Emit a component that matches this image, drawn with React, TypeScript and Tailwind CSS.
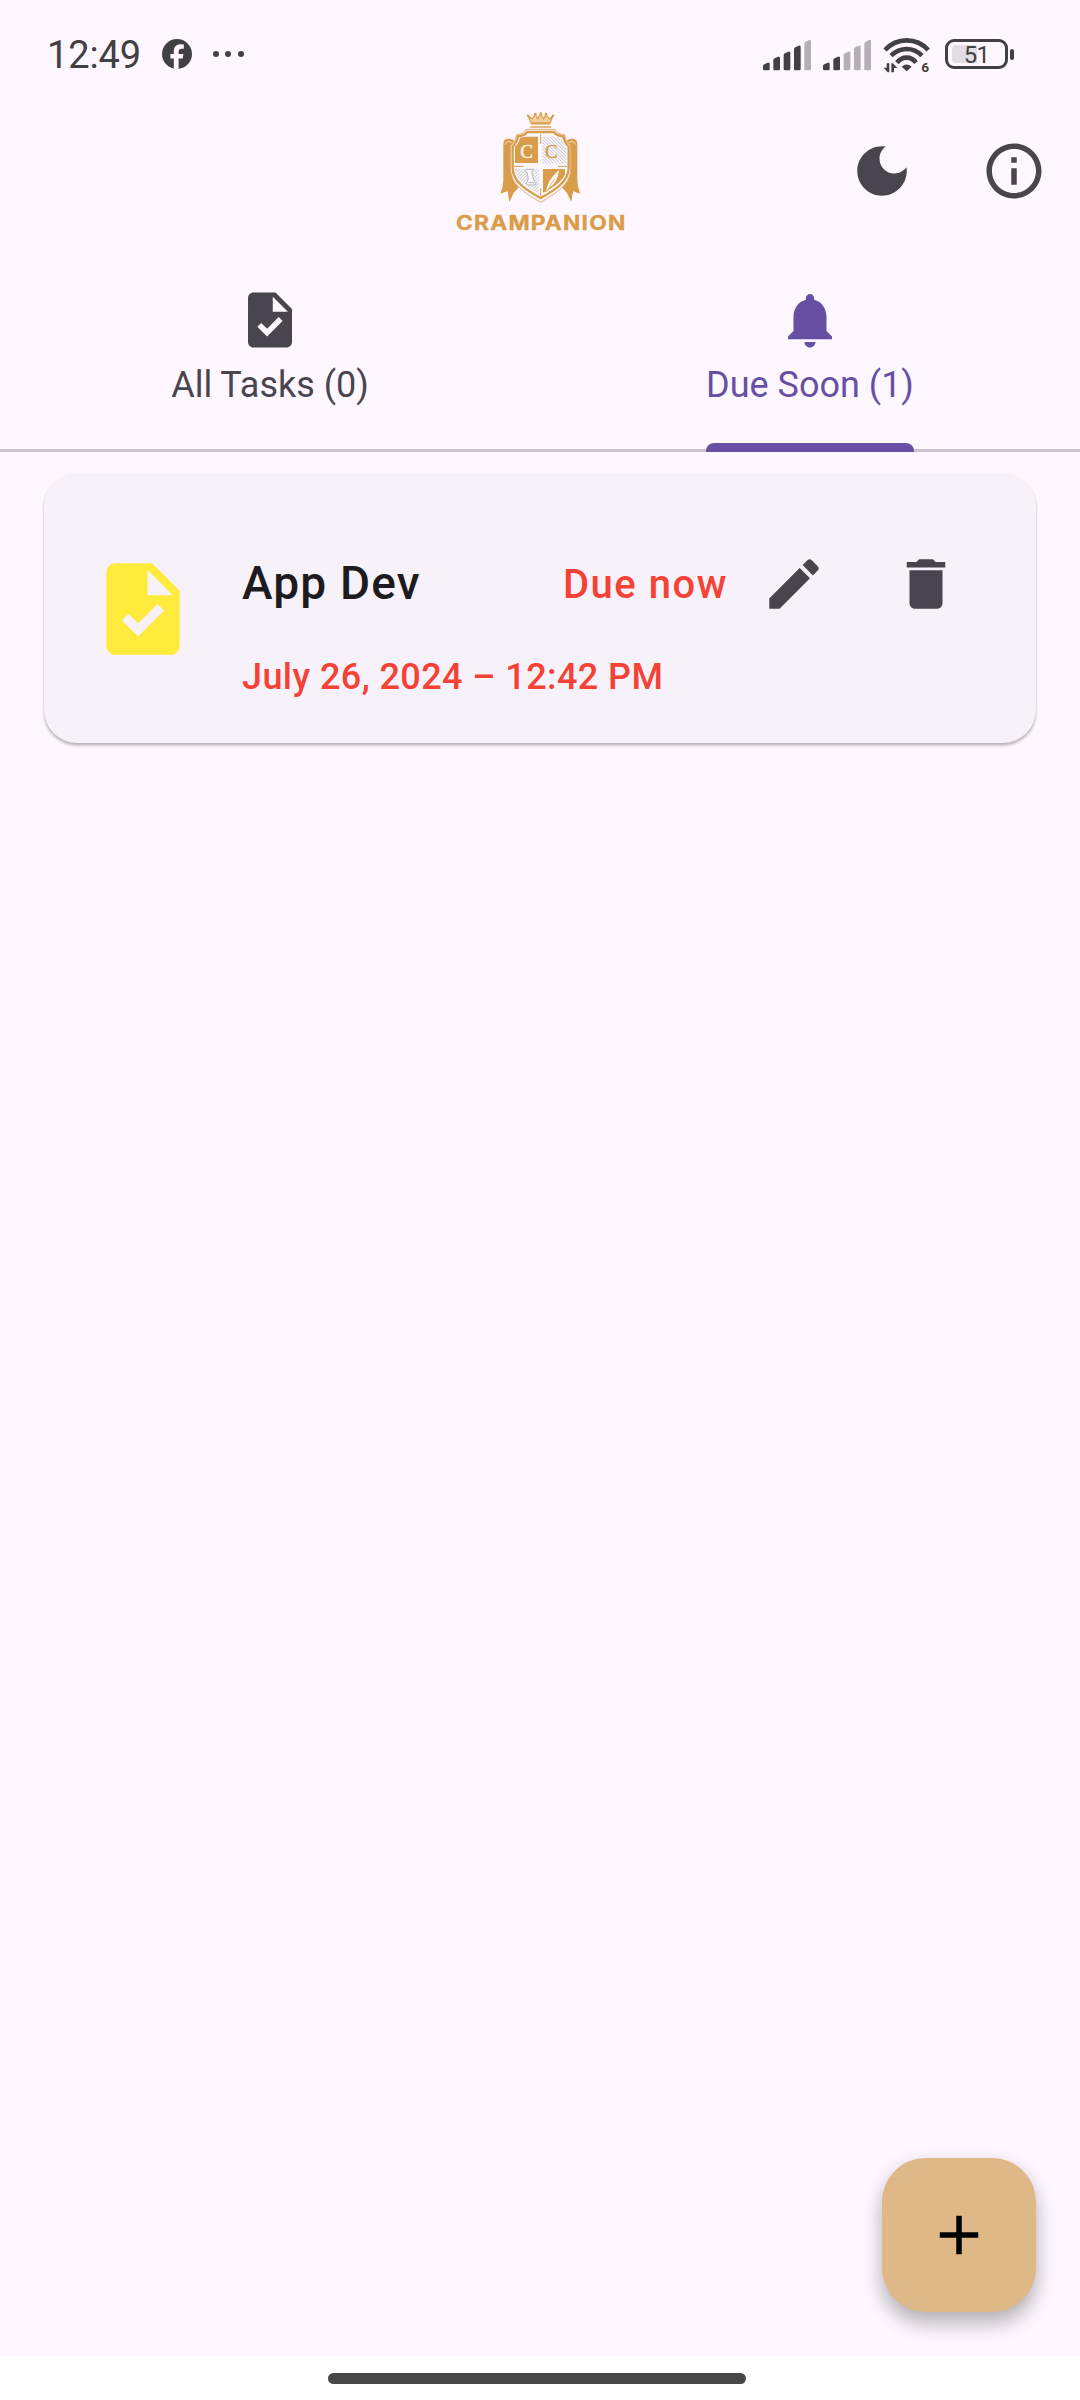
import React from "react";

type IconProps = { d: string; className?: string };

function Icon({ d, className = "size-[66px]" }: IconProps) {
  return (
    <svg viewBox="0 0 24 24" fill="currentColor" className={`block shrink-0 ${className}`}>
      <path d={d} />
    </svg>
  );
}

const ICONS = {
  moon: "M12 3c-4.97 0-9 4.03-9 9s4.03 9 9 9 9-4.03 9-9c0-.46-.04-.92-.1-1.36-.98 1.37-2.58 2.26-4.4 2.26-2.98 0-5.4-2.42-5.4-5.4 0-1.81.89-3.42 2.26-4.4C12.92 3.04 12.46 3 12 3z",
  info: "M11 7h2v2h-2zm0 4h2v6h-2zm1-9C6.48 2 2 6.48 2 12s4.48 10 10 10 10-4.48 10-10S17.52 2 12 2zm0 18c-4.41 0-8-3.59-8-8s3.59-8 8-8 8 3.59 8 8-3.59 8-8 8z",
  task: "M14 2H6c-1.1 0-1.99.9-1.99 2L4 20c0 1.1.89 2 1.99 2H18c1.1 0 2-.9 2-2V8l-6-6zm-3.06 16L7.4 14.46l1.41-1.41 2.12 2.12 4.24-4.24 1.41 1.41L10.94 18zM13 9V3.5L18.5 9H13z",
  bell: "M12 22c1.1 0 2-.9 2-2h-4c0 1.1.89 2 2 2zm6-6v-5c0-3.07-1.64-5.64-4.5-6.32V4c0-.83-.67-1.5-1.5-1.5s-1.5.67-1.5 1.5v.68C7.63 5.36 6 7.92 6 11v5l-2 2v1h16v-1l-2-2z",
  edit: "M3 17.25V21h3.75L17.81 9.94l-3.75-3.75L3 17.25zM20.71 7.04c.39-.39.39-1.02 0-1.41l-2.34-2.34c-.39-.39-1.02-.39-1.41 0l-1.83 1.83 3.75 3.75 1.83-1.83z",
  trash: "M6 19c0 1.1.9 2 2 2h8c1.1 0 2-.9 2-2V7H6v12zM19 4h-3.5l-1-1h-5l-1 1H5v2h14V4z",
  plus: "M19 13h-6v6h-2v-6H5v-2h6V5h2v6h6v2z",
};

function Signal({ active }: { active: number }) {
  const tops = [126, 108, 93, 75, 58];
  return (
    <svg viewBox="0 0 144 96" className="block h-8 w-12 shrink-0">
      {tops.map((top, i) => {
        const x = i * 31;
        const y = top - 56;
        return (
          <path
            key={top}
            d={`M${x} ${y + 12}Q${x} ${y + 8} ${x + 4} ${y + 6}L${x + 14} ${y + 1}Q${x + 20} ${y - 1} ${x + 20} ${y + 5}V90Q${x + 20} 94 ${x + 16} 94H${x + 4}Q${x} 94 ${x} 90Z`}
            fill={i < active ? "#414042" : "#b4afb6"}
          />
        );
      })}
    </svg>
  );
}

function Wifi() {
  return (
    <svg viewBox="430 50 142 110" className="block h-[36.7px] w-[47.3px] shrink-0 overflow-visible">
      <g fill="none" stroke="#414042" strokeWidth="14">
        <path d="M436 89Q463 60 501 60T566 89" />
        <path d="M454 106Q475 86 501 86T547 106" />
        <path d="M472 127Q484 112 501 112T529 127" />
      </g>
      <path d="M486 139Q501 126 516 139L501 153Z" fill="#414042" />
      <path d="M441 129h8v27h-5l-12-14h9zM455 156v-27h5l13 14h-10v13z" fill="#414042" />
      <text x="545" y="156" fontFamily="Roboto" fontWeight="700" fontSize="41" fill="#414042">6</text>
    </svg>
  );
}

function Battery() {
  return (
    <div className="flex items-center">
      <div className="relative flex h-[30px] w-[63px] items-center justify-center rounded-[9px] border-3 border-[#414042]">
        <div className="absolute left-[4px] top-[3px] h-[18px] w-[25px] rounded-l-[4px] bg-[#e2dde4]" />
        <span className="relative pt-[1px] text-[24px] leading-[24px] font-normal tracking-[-0.8px] text-[#414042]">51</span>
      </div>
      <div className="ml-[2px] h-[11px] w-[4px] rounded-[2px] bg-[#414042]" />
    </div>
  );
}

function Logo() {
  return (
    <svg viewBox="0 0 600 420" className="block h-[140px] w-[200px]">
      <defs>
        <pattern id="hatch-down" width="7" height="7" patternUnits="userSpaceOnUse" patternTransform="rotate(-45)">
          <rect width="7" height="7" fill="#fbf7fb" />
          <rect width="2.2" height="7" fill="#c3c6cd" />
        </pattern>
        <pattern id="hatch-up" width="7" height="7" patternUnits="userSpaceOnUse" patternTransform="rotate(45)">
          <rect width="7" height="7" fill="#fbf7fb" />
          <rect width="2.2" height="7" fill="#c3c6cd" />
        </pattern>
        <clipPath id="field">
          <path d="M240 113Q260 111 268 104H336Q346 111 365 113Q367 128 380 141V202C380 238 342 262 302 283C262 262 224 238 224 202V141Q238 128 240 113Z" />
        </clipPath>
      </defs>
      <g stroke="#d99c48" fill="none" strokeLinejoin="round">
        <path d="M264 47L276 57L286 43L293 57L302 41L311 57L318 43L328 57L339 47L329 71H274Z" fill="#f0cf9f" strokeWidth="3.5" />
        <path d="M275 70H329" strokeWidth="6" />
        <path d="M271 81H333" strokeWidth="4" />
      </g>
      <g fill="#d99c48">
        <circle cx="264" cy="47" r="3.5" />
        <circle cx="286" cy="42" r="4" />
        <circle cx="302" cy="41" r="4" />
        <circle cx="318" cy="42" r="4" />
        <circle cx="339" cy="47" r="3.5" />
        <path d="M190 131Q190 116 206 116Q220 116 226 128L214 140V215Q217 243 236 262L221 279L208 306L203 274L181 281Q191 259 190 237Z" />
        <path d="M412 131Q412 116 396 116Q382 116 376 128L388 140V215Q385 243 366 262L381 279L394 306L399 274L421 281Q411 259 412 237Z" />
      </g>
      <path d="M194 134Q204 117 220 131M408 134Q398 117 382 131" stroke="#f8e6cd" strokeWidth="3" fill="none" />
      <path d="M258 88H346Q353 103 374 104Q374 122 392 137V206C392 252 350 279 302 307C254 279 212 252 212 206V137Q230 122 230 104Q251 103 258 88Z" fill="#fdf5fa" stroke="#dfb27a" strokeWidth="3" />
      <path d="M262 96H342Q351 108 370 109Q372 126 386 139V204C386 244 346 270 302 294C258 270 218 244 218 204V139Q232 126 234 109Q253 108 262 96Z" fill="#fdf7fd" stroke="#d99c48" strokeWidth="7" />
      <g clipPath="url(#field)">
        <path d="M225 110H294V189H225Z" fill="#d99c48" />
        <path d="M307 110H380V191H307Z" fill="url(#hatch-down)" />
        <path d="M224 206H297V283H224Z" fill="url(#hatch-up)" />
        <path d="M309 207H375V278H309Z" fill="#d99c48" />
      </g>
      <path d="M302 103V132M302 265V288M222 199H250M354 199H382" stroke="#d99c48" strokeWidth="3" />
      <path d="M255 211Q258 206 265 208H281Q273 214 276 224L283 244Q292 249 286 255H263Q254 251 261 246L265 236L261 218Q258 218 255 211ZM266 248H283" fill="#fdf7fd" stroke="#aeb7c5" strokeWidth="3" />
      <path d="M318 277Q321 240 357 210Q355 245 330 262Z" fill="#fff8f0" />
      <path d="M318 277L344 236" stroke="#d99c48" strokeWidth="2" />
      <text x="241" y="174" fontFamily="Liberation Serif" fontSize="57" fill="#fff5e7" stroke="#fff5e7" strokeWidth="1">C</text>
      <text x="315" y="174" fontFamily="Liberation Serif" fontSize="57" fill="#d99c48" stroke="#d99c48" strokeWidth="1">C</text>
      <g transform="translate(48 389) scale(1.16 1)">
        <text fontFamily="Inter" fontWeight="700" fontSize="59" fill="#d99c48" stroke="#d99c48" strokeWidth="1" textLength="438" lengthAdjust="spacing">CRAMPANION</text>
      </g>
    </svg>
  );
}

function StatusBar() {
  return (
    <div className="flex h-[100px] shrink-0 items-start justify-between pl-[47px] pr-[66px] text-[#414042]">
      <div className="flex items-center pt-[32px]">
        <span className="w-[115px] pt-[2px] text-[38px] leading-[42px] font-normal tracking-[-0.1px]">12:49</span>
        <svg viewBox="0 0 30 30" className="size-[30px]">
          <circle cx="15" cy="15" r="15" fill="#414042" />
          <path d="M11.8 30V19.6H8.4V15H11.8V12.4C11.8 7.6 14.5 5.3 18.8 5.3L21.8 5.6V9.7H19.6C17.5 9.7 16.6 10.8 16.6 12.7V15H21.4L20.7 19.6H16.6V30Z" fill="#fef7ff" />
        </svg>
        <div className="ml-[21px] flex gap-[6.4px]">
          <i className="size-[6px] rounded-full bg-current" />
          <i className="size-[6px] rounded-full bg-current" />
          <i className="size-[6px] rounded-full bg-current" />
        </div>
      </div>
      <div className="flex items-start pt-[38.5px]">
        <Signal active={4} />
        <div className="ml-[12px]"><Signal active={2} /></div>
        <div className="-mt-[2px] ml-[12px]"><Wifi /></div>
        <div className="ml-[14.5px] mt-[0.5px]"><Battery /></div>
      </div>
    </div>
  );
}

export default function App() {
  return (
    <div className="flex h-[2400px] w-[1080px] flex-col overflow-hidden bg-[#fef7ff] font-['Roboto',sans-serif] text-[#49454f]">
      <StatusBar />
      <header className="grid h-[187px] shrink-0 grid-cols-3">
        <div />
        <div className="flex justify-center"><Logo /></div>
        <div className="flex gap-[66px] pl-[129px] pt-[38px]">
          <Icon d={ICONS.moon} />
          <Icon d={ICONS.info} />
        </div>
      </header>

      <nav className="grid h-[165px] shrink-0 grid-cols-2">
        <div className="flex flex-col items-center border-b-[3px] border-[#cac4d0]">
          <Icon d={ICONS.task} />
          <span className="mt-[10px] text-[36px] leading-[44px]">All Tasks (0)</span>
        </div>
        <div className="flex flex-col items-center border-b-[3px] border-[#cac4d0] text-[#6750a4]">
          <Icon d={ICONS.bell} />
          <span className="mt-[10px] text-[36px] leading-[44px]">Due Soon (1)</span>
          <div className="-mb-[3px] mt-auto h-[9px] w-[208px] shrink-0 rounded-t-[8px] bg-[#6750a4]" />
        </div>
      </nav>

      <main className="flex-1 px-[44px] pt-[21px]">
        <article className="flex h-[270px] w-full rounded-[33px] bg-[#f7f2fa] shadow-[0_3px_3px_rgba(0,0,0,0.2),0_1px_2px_rgba(0,0,0,0.12)]">
          <div className="pl-[44px] pt-[81px] text-[#ffeb3b]">
            <Icon d={ICONS.task} className="size-[110px]" />
          </div>
          <div className="ml-[44px] flex flex-col pt-[78px]">
            <div className="flex h-[66px] items-center">
              <h1 className="w-[321px] whitespace-nowrap pb-[3px] text-[46px] leading-[60px] font-medium tracking-[1.2px] text-[#1d1b20]">App Dev</h1>
              <span className="w-[198px] whitespace-nowrap pt-[1px] text-[40px] leading-[60px] font-medium tracking-[1.5px] text-[#f44336]">Due now</span>
              <Icon d={ICONS.edit} />
              <Icon d={ICONS.trash} className="ml-[66px] size-[66px]" />
            </div>
            <p className="mt-[38px] text-[36px] leading-[44px] font-medium tracking-[0.42px] text-[#f44336]">July 26, 2024 – 12:42 PM</p>
          </div>
        </article>
      </main>

      <div className="flex h-[198px] shrink-0 justify-end pr-[44px]">
        <button className="flex size-[154px] items-center justify-center rounded-[44px] bg-[#deb887] text-black shadow-[0_13px_20px_rgba(0,0,0,0.22),0_4px_20px_rgba(0,0,0,0.10)]">
          <Icon d={ICONS.plus} />
        </button>
      </div>
      <footer className="h-[44px] shrink-0 bg-white pl-[328px] pt-[17px]">
        <div className="h-[10.5px] w-[418px] rounded-full bg-[#474747]" />
      </footer>
    </div>
  );
}
